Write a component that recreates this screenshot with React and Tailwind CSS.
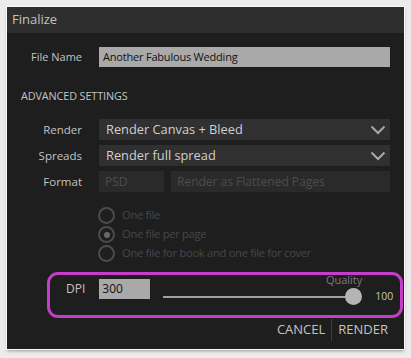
const font = { fontFamily: '"Open Sans", "Noto Sans", sans-serif' };

function Chevron() {
  return (
    <svg width="16" height="10" viewBox="0 0 16 10" className="shrink-0">
      <path d="M1.5 1.5 L8 8 L14.5 1.5" fill="none" stroke="#a9a9a9" strokeWidth="2" />
    </svg>
  );
}

function Row({ label, children }) {
  return (
    <div className="flex h-[21px] items-center">
      <div className="w-[76px] pr-[1px] text-right text-[11.5px] text-[#c4c4c4]">{label}</div>
      <div className="ml-[16px] flex flex-1 gap-[7px]">{children}</div>
    </div>
  );
}

function SelectBox({ value }) {
  return (
    <div className="flex h-[21px] flex-1 items-center justify-between bg-[#303030] pl-[7px] pr-[4px] text-[12.8px] text-[#cfcfcf]">
      <span>{value}</span>
      <Chevron />
    </div>
  );
}

function Radio({ label, checked }) {
  return (
    <div className="flex h-[19px] items-center">
      <div className="grid h-[17px] w-[17px] place-items-center rounded-full border-2 border-[#4c4c4c]">
        {checked ? <div className="h-[6px] w-[6px] rounded-full bg-[#6a6a6a]" /> : null}
      </div>
      <span className="ml-[7px] text-[11.2px] tracking-[-0.3px] text-[#474747]">{label}</span>
    </div>
  );
}

export default function App() {
  return (
    <div className="h-[358px] w-[411px] bg-[#ececec] pl-[7px] pt-[7px]" style={font}>
      <div className="h-[342px] w-[397px] bg-[#1e1e1e] shadow-[0_0_0_1px_#fafafa,0_2px_3px_rgba(0,0,0,0.35)]">
        <div className="flex h-[26px] items-center bg-[#2e2e2e] pl-[5px] text-[13px] text-[#c2c2c2]">Finalize</div>

        <div className="mt-[14px] flex h-[20px] items-center">
          <div className="w-[76px] pr-[1px] text-right text-[11px] text-[#c4c4c4]">File Name</div>
          <div className="ml-[16px] flex h-[20px] w-[291px] items-center bg-[#a9a9a9] pl-[4px] text-[11px] tracking-[-0.2px] text-[#111]">
            Another Fabulous Wedding
          </div>
        </div>

        <div className="mt-[21px] h-[16px] pl-[14px] text-[10.8px] leading-[16px] tracking-[-0.1px] text-[#c4c4c4]">ADVANCED SETTINGS</div>

        <div className="mt-[15px] flex w-[383px] flex-col gap-[5px]">
          <Row label="Render">
            <SelectBox value="Render Canvas + Bleed" />
          </Row>
          <Row label="Spreads">
            <SelectBox value="Render full spread" />
          </Row>
          <Row label="Format">
            <div className="flex h-[21px] w-[65px] items-center bg-[#2a2a2a] pl-[6px] text-[12px] text-[#4d4d4d]">PSD</div>
            <div className="flex h-[21px] flex-1 items-center bg-[#2a2a2a] pl-[6px] text-[12px] text-[#4d4d4d]">
              Render as Flattened Pages
            </div>
          </Row>
        </div>

        <div className="ml-[91px] mt-[14px] flex flex-col">
          <Radio label="One file" />
          <Radio label="One file per page" checked />
          <Radio label="One file for book and one file for cover" />
        </div>

        <div className="ml-[40px] mt-[9px] flex h-[46px] w-[356px] rounded-[11px] border-[3px] border-[#c43ec9]">
          <div className="mt-[4px] flex h-[20px] items-center pl-[16px]">
            <span className="text-[12px] text-[#c4c4c4]">DPI</span>
            <div className="ml-[14px] flex h-[20px] w-[51px] items-center bg-[#a9a9a9] pl-[3px] text-[12px] text-[#111]">300</div>
          </div>
          <div className="ml-[13px] flex flex-col">
            <div className="-mt-[1px] h-[12px] w-[199px] text-right text-[11px] leading-[12px] text-[#7c7c7c]">Quality</div>
            <div className="mt-[2px] flex h-[17px] items-center">
              <div className="relative h-[17px] w-[199px]">
                <div className="absolute left-0 right-[8px] top-[8px] h-[2px] bg-[#a0a0a0]" />
                <div className="absolute right-0 top-0 h-[17px] w-[17px] rounded-full bg-[#b5b5b5]" />
              </div>
              <span className="ml-[13px] text-[10.5px] text-[#c4c4c4]">100</span>
            </div>
          </div>
        </div>

        <div className="mt-[1px] flex h-[22px] items-center justify-end pr-[16px] text-[13px] text-[#c4c4c4]">
          <span>CANCEL</span>
          <div className="mx-[6px] h-[22px] w-px bg-[#3e3e3e]" />
          <span>RENDER</span>
        </div>
      </div>
    </div>
  );
}
